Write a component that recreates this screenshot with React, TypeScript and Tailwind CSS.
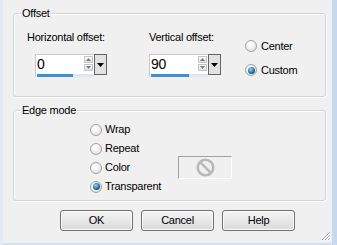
import type { ReactNode } from "react";

const font = "font-['Liberation_Sans',Arial,sans-serif]";

function Group({
  title,
  className,
  children,
}: {
  title: string;
  className: string;
  children: ReactNode;
}) {
  return (
    <div
      className={`relative rounded-[3px] border border-[#d5d5d5] shadow-[1px_1px_0_#ffffff,inset_1px_1px_0_#ffffff] ${className}`}
    >
      {/* legend sits over the top border */}
      <span className="absolute left-[7px] top-[-7px] bg-[#f0f0f0] px-[1px] leading-[13px]">
        {title}
      </span>
      {children}
    </div>
  );
}

function Radio({ checked = false }: { checked?: boolean }) {
  return (
    <span className="flex h-[12px] w-[12px] shrink-0 items-center justify-center rounded-full border border-[#a2a2a2] bg-[radial-gradient(circle_at_40%_35%,#ffffff_15%,#d6d6d6)]">
      {checked && (
        <span className="h-[7px] w-[7px] rounded-full bg-[radial-gradient(circle_at_40%_35%,#8fd8f8,#145f8f_65%)]" />
      )}
    </span>
  );
}

function Option({ label, checked }: { label: string; checked?: boolean }) {
  return (
    <div className="flex h-[19px] items-center gap-[3px]">
      <Radio checked={checked} />
      <span className="leading-[13px]">{label}</span>
    </div>
  );
}

function Spinner({ value, barClass }: { value: string; barClass: string }) {
  return (
    <div className="flex h-[23px]">
      <div className="flex w-[59px] flex-col border-l border-t border-[#c9c9c9] bg-white">
        <div className="flex h-[19px]">
          <span className="flex-1 pl-[1px] text-[14px] leading-[19px]">{value}</span>
          <div className="mr-[1px] mt-[1px] flex w-[9px] flex-col gap-[1px]">
            <div className="flex h-[7px] items-center justify-center border border-[#c4c4c4] bg-linear-to-b from-[#fafafa] to-[#e2e2e2]">
              <svg width="5" height="3" viewBox="0 0 5 3">
                <path d="M0 3 L2.5 0 L5 3 Z" fill="#6b7b8c" />
              </svg>
            </div>
            <div className="flex h-[7px] items-center justify-center border border-[#c4c4c4] bg-linear-to-b from-[#fafafa] to-[#e2e2e2]">
              <svg width="5" height="3" viewBox="0 0 5 3">
                <path d="M0 0 L2.5 3 L5 0 Z" fill="#6b7b8c" />
              </svg>
            </div>
          </div>
        </div>
        <div className="flex h-[3px] pl-[1px]">
          <div className={`${barClass} bg-[#3b8fe0]`} />
          <div className="flex-1 bg-[#dfe7ef]" />
        </div>
      </div>
      <div className="flex h-[21px] w-[13px] items-center justify-center border border-[#646464] bg-[#e2e2e2]">
        <svg width="7" height="4" viewBox="0 0 7 4">
          <path d="M0 0 L3.5 4 L7 0 Z" fill="#000000" />
        </svg>
      </div>
    </div>
  );
}

function DialogButton({ label }: { label: string }) {
  return (
    <button className="flex h-[21px] w-[73px] items-center justify-center rounded-[3px] border border-[#707070] bg-linear-to-b from-[#f5f5f5] to-[#dadada] leading-[13px] shadow-[inset_0_0_0_1px_#fbfbfb]">
      {label}
    </button>
  );
}

export default function App() {
  return (
    <div className={`flex h-[245px] w-[337px] bg-[#d3e0f1] ${font} text-[11px] tracking-[-0.25px] text-black`}>
      <div className="w-[3px] bg-[#e1eaf6]" />

      <div className="relative mb-[2px] flex w-[329px] flex-col bg-[#f0f0f0] pl-[10px]">
        {/* Offset */}
        <Group title="Offset" className="mt-[13px] h-[84px] w-[313px]">
          <div className="flex pl-[13px] pt-[17px]">
            <div className="w-[122px]">
              <div className="leading-[13px]">Horizontal offset:</div>
              <div className="ml-[8px] mt-[10px]">
                <Spinner value="0" barClass="w-[36px]" />
              </div>
            </div>
            <div className="w-[96px]">
              <div className="leading-[13px]">Vertical offset:</div>
              <div className="mt-[10px]">
                <Spinner value="90" barClass="w-[38px]" />
              </div>
            </div>
            <div className="flex flex-col gap-[10px] pt-[8px]">
              <div className="flex h-[14px] items-center gap-[4px]">
                <Radio />
                <span className="leading-[13px]">Center</span>
              </div>
              <div className="flex h-[14px] items-center gap-[4px]">
                <Radio checked />
                <span className="leading-[13px]">Custom</span>
              </div>
            </div>
          </div>
        </Group>

        {/* Edge mode */}
        <Group title="Edge mode" className="mt-[13px] h-[91px] w-[313px]">
          <div className="flex flex-col pl-[76px] pt-[9px]">
            <Option label="Wrap" />
            <Option label="Repeat" />
            <div className="flex h-[19px] items-center gap-[3px]">
              <Radio />
              <span className="w-[70px] leading-[13px]">Color</span>
              <div className="flex h-[23px] w-[54px] shrink-0 items-center justify-center border border-b-white border-l-[#a0a0a0] border-r-white border-t-[#a0a0a0]">
                <svg width="19" height="19" viewBox="0 0 19 19">
                  <circle cx="9.5" cy="9.5" r="7.8" fill="none" stroke="#b9b9b9" strokeWidth="2.6" />
                  <path d="M4.2 4.2 L14.8 14.8" stroke="#b9b9b9" strokeWidth="2.6" />
                </svg>
              </div>
            </div>
            <Option label="Transparent" checked />
          </div>
        </Group>

        {/* Buttons */}
        <div className="ml-[47px] mt-[9px] flex gap-[8px]">
          <DialogButton label="OK" />
          <DialogButton label="Cancel" />
          <DialogButton label="Help" />
        </div>

        {/* size grip */}
        <svg className="absolute bottom-[2px] right-[1px]" width="11" height="11" viewBox="0 0 11 11">
          <path d="M10 2 L2 10 M10 5 L5 10 M10 8 L8 10" stroke="#a8a8a8" strokeWidth="1" />
          <path d="M11 3 L3 11 M11 6 L6 11 M11 9 L9 11" stroke="#ffffff" strokeWidth="1" />
        </svg>
      </div>

      <div className="flex-1 bg-[#c8d8ed]" />
    </div>
  );
}
